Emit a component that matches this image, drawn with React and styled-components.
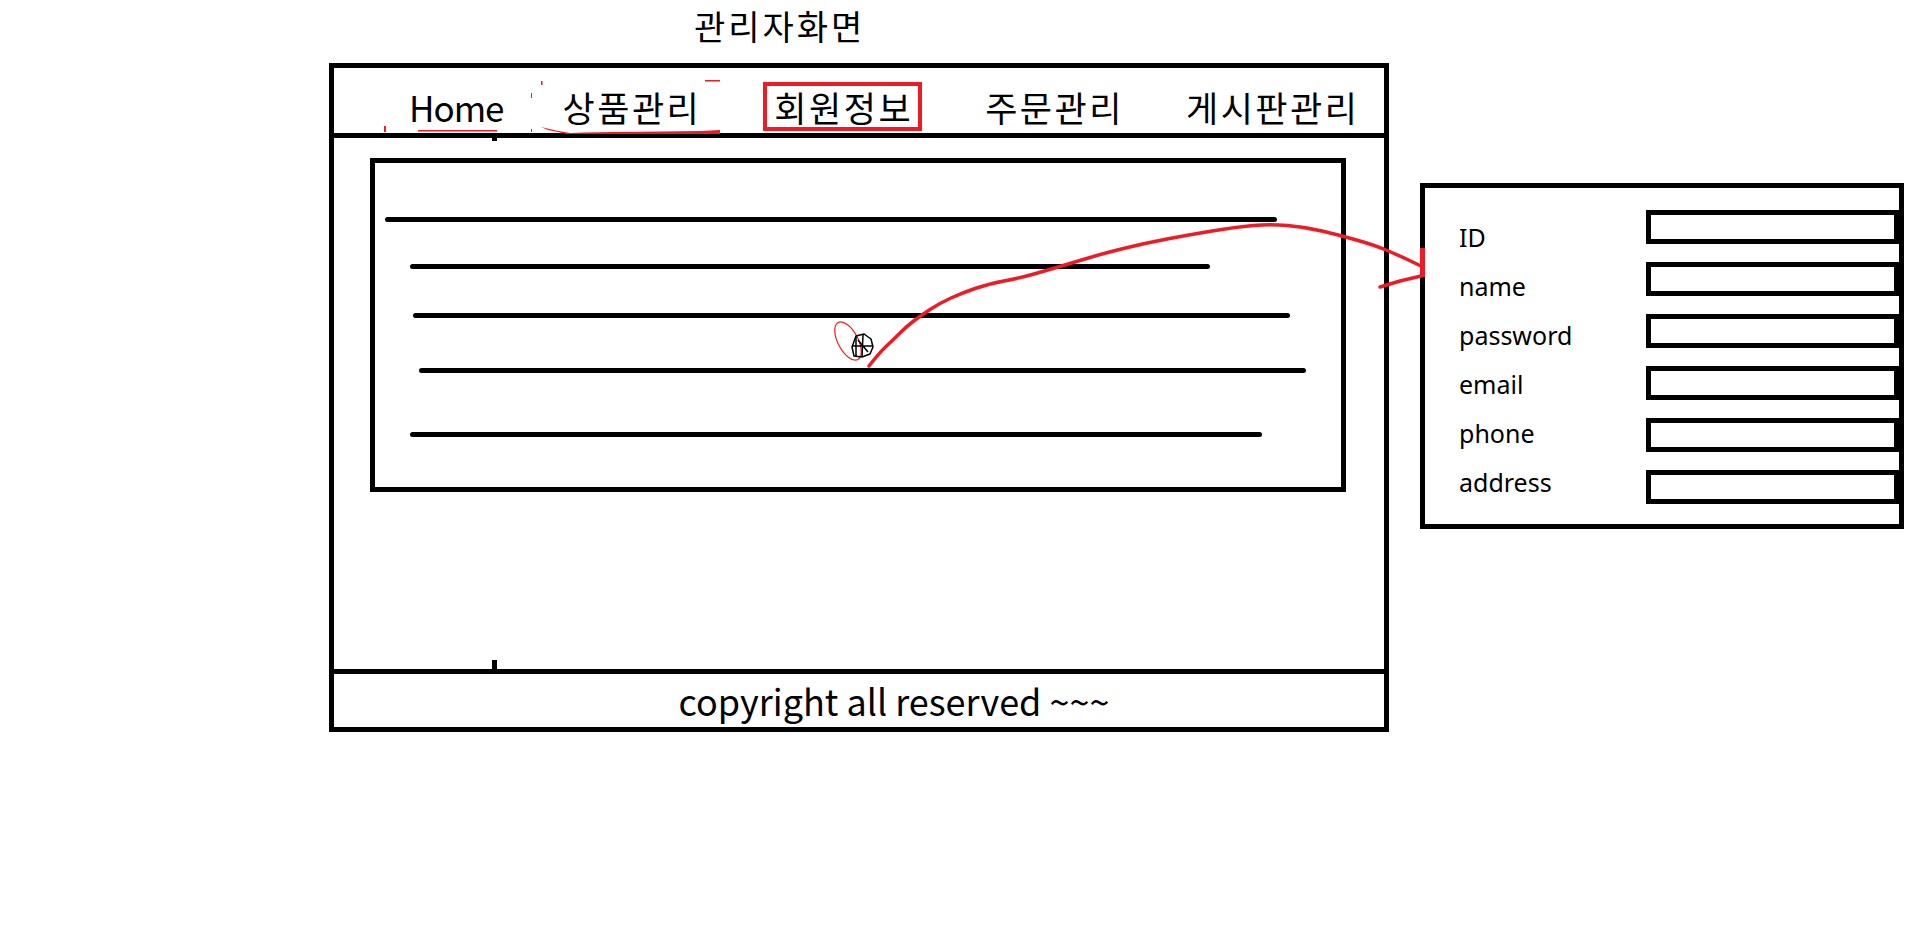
import styled, { createGlobalStyle } from "styled-components";

const RED = "#ed1c24";

const GlobalStyle = createGlobalStyle`
  html, body {
    margin: 0;
    padding: 0;
    background: #fff;
  }
  body {
    font-family: "Noto Sans CJK KR", "Noto Sans", sans-serif;
    color: #000;
  }
`;

// menu labels with the hand-drawn spacing before each one
const menus = [
  { label: "Home", gap: 0 },
  { label: "상품관리", gap: 59 },
  { label: "회원정보", gap: 73, active: true },
  { label: "주문관리", gap: 72 },
  { label: "게시판관리", gap: 62 },
];

// placeholder rows of the member list, offsets as drawn
const rows = [
  { gap: 54, left: 10, width: 892 },
  { gap: 42, left: 35, width: 800 },
  { gap: 44, left: 38, width: 877 },
  { gap: 50, left: 44, width: 887 },
  { gap: 59, left: 35, width: 852 },
];

const fields = ["ID", "name", "password", "email", "phone", "address"];

const arrowPts = [
  [869, 366], [880, 352], [893, 340], [906, 327], [920, 316], [940, 303],
  [962, 293], [988, 284], [1020, 278], [1048, 270], [1075, 262], [1105, 253],
  [1146, 243], [1188, 235], [1236, 227], [1270, 224], [1305, 227], [1339, 235],
  [1374, 245], [1398, 255], [1421, 266],
];

// smooth hand-drawn stroke through the points
function smooth(pts) {
  let d = `M${pts[0][0]} ${pts[0][1]}`;
  for (let i = 1; i < pts.length - 1; i++) {
    const mx = (pts[i][0] + pts[i + 1][0]) / 2;
    const my = (pts[i][1] + pts[i + 1][1]) / 2;
    d += ` Q${pts[i][0]} ${pts[i][1]} ${mx} ${my}`;
  }
  const last = pts[pts.length - 1];
  return d + ` L${last[0]} ${last[1]}`;
}

function Annotations() {
  return (
    <Overlay viewBox="0 0 1914 927" width="1914" height="927">
      {/* eraser leftovers around the menu */}
      <g fill={RED} stroke="none">
        <rect x="418" y="130" width="79" height="1.5" />
        <rect x="384" y="126" width="2" height="6" />
        <rect x="531" y="93" width="1" height="5" />
        <rect x="531" y="129" width="1" height="3" />
        <rect x="541" y="81" width="1.5" height="4" />
        <rect x="705" y="80" width="15" height="1.5" />
        <path d="M541 127 L548 130 L558 132 L566 134 L720 134 L720 130 L700 131 L660 131.5 L612 132 L584 132.5 L570 133 L556 130.5 Z" />
      </g>
      {/* tick marks left from an erased divider */}
      <rect x="492" y="137" width="5" height="4" fill="#000" />
      <rect x="492" y="660" width="5" height="10" fill="#000" />

      {/* selection marker */}
      <ellipse
        cx="848"
        cy="341"
        rx="10"
        ry="21"
        transform="rotate(-28 848 341)"
        fill="none"
        stroke={RED}
        strokeWidth="1.2"
      />
      <g fill="none" stroke="#000" strokeWidth="1.5" strokeLinejoin="round">
        <path d="M856 336 L864 334 L871 339 L873 347 L870 354 L862 357 L854 356 L852 347 Z" />
        <path d="M856 336 L856 356 M852 346 L872 346 M863 335 L862 357 M858 340 L868 352" />
      </g>

      {/* arrow to the detail panel */}
      <g fill="none" stroke={RED} strokeWidth="3.5" strokeLinecap="round" strokeLinejoin="round">
        <path d={smooth(arrowPts)} />
        <polyline points="1380,287 1400,281 1421,276" />
      </g>
      <rect x="1420" y="248" width="5" height="29" fill={RED} />
    </Overlay>
  );
}

export default function App() {
  return (
    <>
      <GlobalStyle />
      <Page>
        <Main>
          <Title>관리자화면</Title>
          <Frame>
            <Nav>
              {menus.map((m) => (
                <NavItem
                  key={m.label}
                  $gap={m.gap}
                  $active={m.active}
                  $latin={!/[가-힣]/.test(m.label)}
                >
                  {m.label}
                </NavItem>
              ))}
            </Nav>
            <Content>
              <Board>
                {rows.map((r, i) => (
                  <Line key={i} $gap={r.gap} $left={r.left} $width={r.width} />
                ))}
              </Board>
            </Content>
            <Footer>copyright all reserved ~~~</Footer>
          </Frame>
        </Main>

        <Panel>
          <LabelCol>
            {fields.map((f) => (
              <Label key={f}>{f}</Label>
            ))}
          </LabelCol>
          <FieldCol>
            {fields.map((f) => (
              <Input key={f} />
            ))}
          </FieldCol>
        </Panel>

        <Annotations />
      </Page>
    </>
  );
}

const Page = styled.div`
  position: relative;
  width: 1914px;
  height: 927px;
  display: flex;
  align-items: flex-start;
  overflow: hidden;
`;

const Main = styled.div`
  display: flex;
  flex-direction: column;
  margin-left: 329px;
`;

const Title = styled.h1`
  margin: 0 0 0 365px;
  height: 63px;
  font-size: 34px;
  font-weight: 400;
  line-height: 51px;
  letter-spacing: 3px;
`;

const Frame = styled.div`
  box-sizing: border-box;
  width: 1060px;
  height: 669px;
  border: 5px solid #000;
  display: flex;
  flex-direction: column;
`;

const Nav = styled.nav`
  box-sizing: border-box;
  height: 70px;
  border-bottom: 5px solid #000;
  display: flex;
  align-items: flex-start;
  padding: 14px 0 0 75px;
`;

const NavItem = styled.span`
  font-size: 35px;
  line-height: 41px;
  white-space: nowrap;
  letter-spacing: ${(p) => (p.$latin ? "-1px" : "2.5px")};
  padding: 0 5px 0 7px;
  margin: 0 -9px 0 ${(p) => p.$gap - 11}px;
  border: 4px solid ${(p) => (p.$active ? RED : "transparent")};
`;

const Content = styled.section`
  flex: 1;
  padding: 20px 0 0 36px;
`;

const Board = styled.div`
  box-sizing: border-box;
  width: 976px;
  height: 334px;
  border: 5px solid #000;
  display: flex;
  flex-direction: column;
`;

const Line = styled.div`
  height: 5px;
  border-radius: 3px;
  background: #000;
  margin-top: ${(p) => p.$gap}px;
  margin-left: ${(p) => p.$left}px;
  width: ${(p) => p.$width}px;
`;

const Footer = styled.footer`
  height: 53px;
  border-top: 5px solid #000;
  padding-left: 70px;
  text-align: center;
  font-size: 36px;
  line-height: 53px;
`;

const Panel = styled.div`
  box-sizing: border-box;
  width: 484px;
  height: 346px;
  margin: 183px 0 0 31px;
  border: 5px solid #000;
  display: flex;
`;

const LabelCol = styled.div`
  width: 187px;
  padding: 25px 0 0 34px;
  display: flex;
  flex-direction: column;
`;

const Label = styled.span`
  font-family: "Noto Sans", "Open Sans", sans-serif;
  font-size: 25px;
  line-height: 49px;
`;

const FieldCol = styled.div`
  padding-top: 22px;
  display: flex;
  flex-direction: column;
  gap: 18px;
`;

const Input = styled.div`
  box-sizing: border-box;
  width: 253px;
  height: 34px;
  border: 5px solid #000;
`;

const Overlay = styled.svg`
  position: absolute;
  left: 0;
  top: 0;
  pointer-events: none;
`;
